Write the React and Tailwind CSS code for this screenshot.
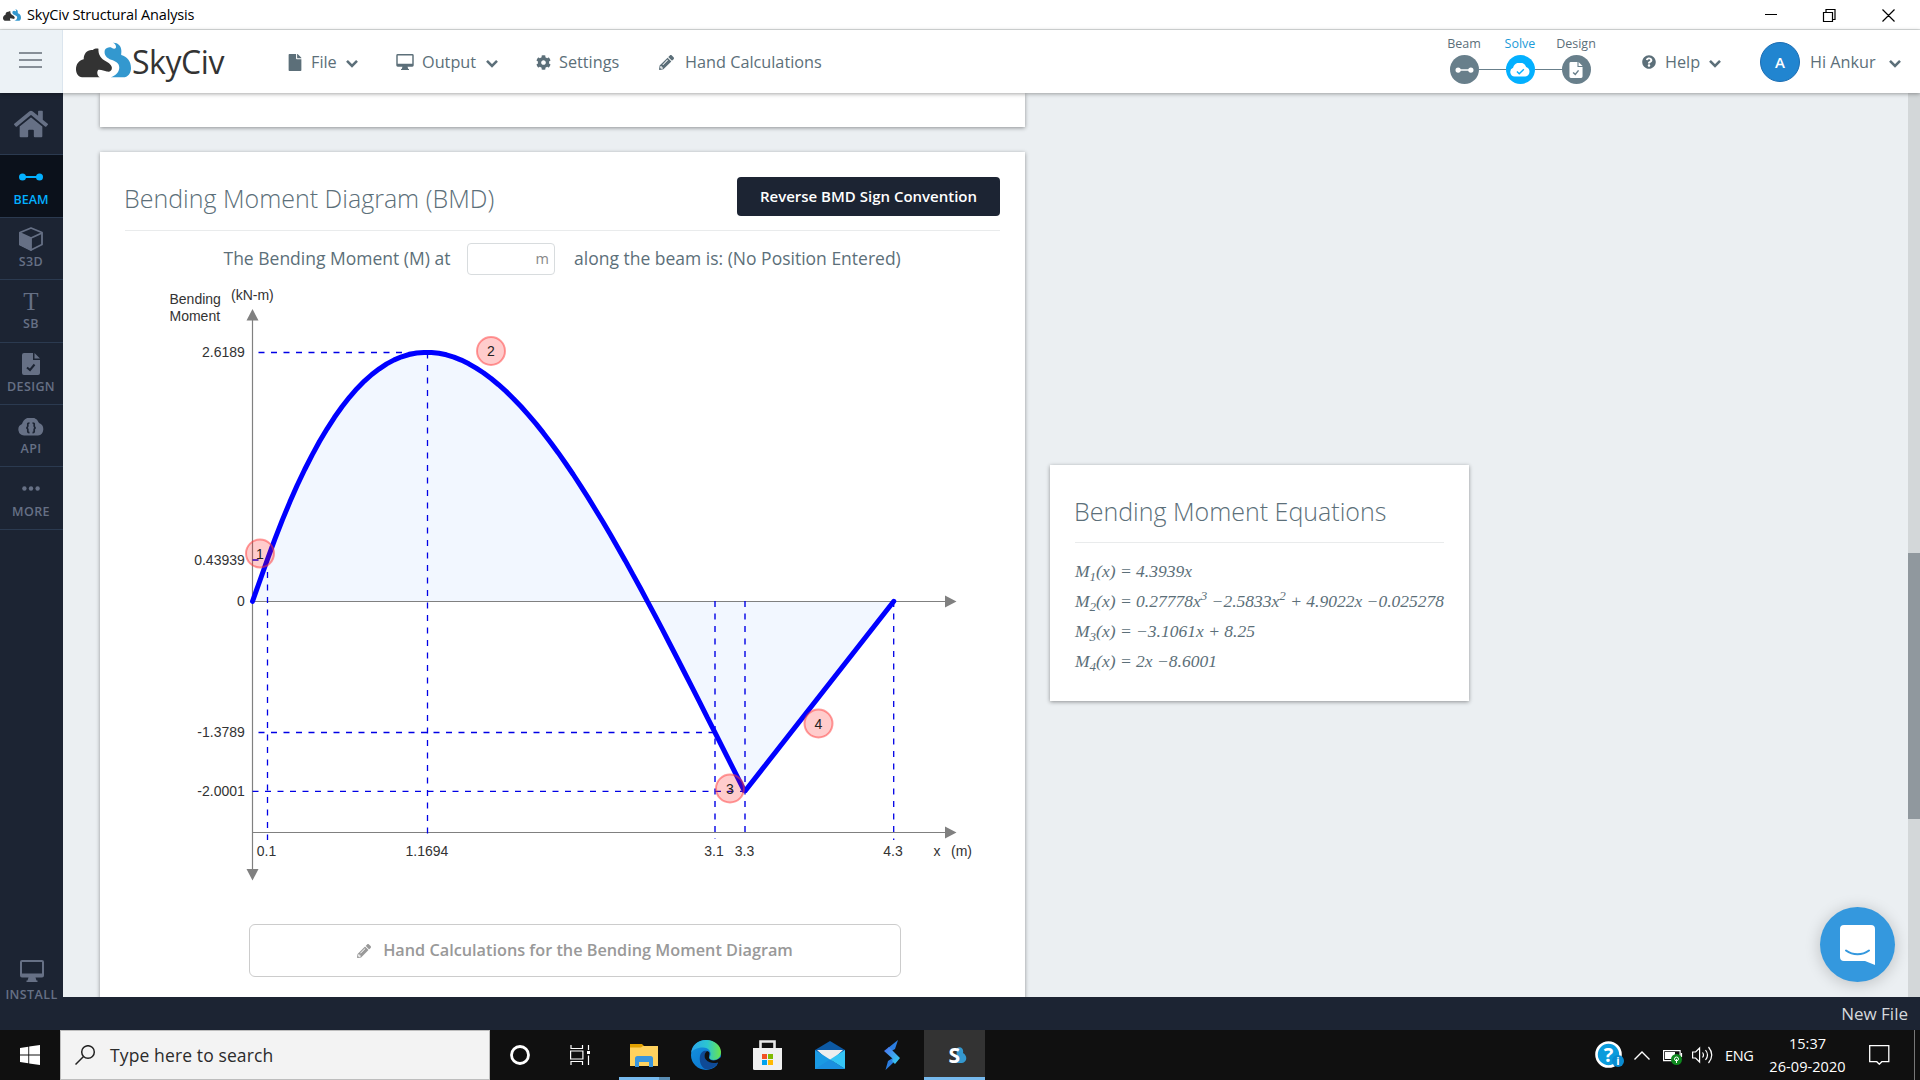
import React from "react";
import { FaHome, FaCog, FaPencilAlt, FaQuestionCircle, FaFile } from "react-icons/fa";

const Chevron = ({ className = "" }) => (
  <svg className={`h-[9px] w-[12px] shrink-0 ${className}`} viewBox="0 0 12 9" fill="none" stroke="currentColor" strokeWidth="2.6">
    <path d="M1 1.8 6 6.8 11 1.8" />
  </svg>
);

const Monitor = ({ className = "" }) => (
  <svg className={`shrink-0 ${className}`} viewBox="0 0 24 22" fill="currentColor">
    <path fillRule="evenodd" d="M2 0h20a2 2 0 0 1 2 2v13.500a2 2 0 0 1-2 2h-6.500l1 3h1v1.500h-11v-1.500h1l1-3h-6.500a2 2 0 0 1-2-2v-13.500a2 2 0 0 1 2-2zM2 2v11.500h20v-11.500z" />
  </svg>
);

const BeamIcon = ({ className = "" }) => (
  <svg className={`shrink-0 ${className}`} viewBox="0 0 24 8" fill="currentColor">
    <circle cx="3.500" cy="4" r="3.500" />
    <circle cx="20.500" cy="4" r="3.500" />
    <path d="M3 3h18v2h-18z" />
  </svg>
);

const DocCheck = ({ className = "", check }) => (
  <svg className={`shrink-0 ${className}`} viewBox="0 0 18 22">
    <path fill="currentColor" d="M2 0h9v7h7v13a2 2 0 0 1-2 2h-14a2 2 0 0 1-2-2v-18a2 2 0 0 1 2-2zM12.500 0 18 5.500h-5.500z" />
    <path className={check} d="M5 14.500 8 17 12.500 11.500" fill="none" strokeWidth="2" />
  </svg>
);

const Cloud = ({ className = "", children }) => (
  <svg className={`shrink-0 ${className}`} viewBox="0 0 26 18">
    <path fill="currentColor" d="M6 17.500a6 6 0 0 1-2-11.500a9 9 0 0 1 17-1a6.500 6.500 0 0 1-1 12.500z" />
    {children}
  </svg>
);

const LogoMark = ({ className = "" }) => (
  <svg className={className} viewBox="0 0 164 107" preserveAspectRatio="none">
    <path
      fill="#3398cf"
      d="M86 24C90 17 100 14 106 17C114 22 121 20 119 12C118 7 115 4 110 2C124 1 135 11 135 24C136 31 134 36 135 39C152 44 164 58 164 77C164 93 155 105 140 105H104C120 99 129 89 129 76C129 63 118 57 105 53C93 49 82 39 86 24z"
    />
    <path
      fill="#333"
      d="M18 105C7 103 0 94 0 81C0 66 9 53 23 51C23 34 34 22 50 24C55 20 61 19 67 20C66 35 72 46 84 54C94 60 105 65 107 76C108 85 101 90 92 88C84 86 76 82 66 83C61 91 64 100 71 105z"
    />
  </svg>
);

function TitleBar() {
  return (
    <div className="flex h-[30px] shrink-0 items-center border-b border-[#dcdfdf] bg-white">
      <LogoMark className="ml-[3px] h-[12px] w-[18px]" />
      <span className="ml-[6px] grow text-[14.500px] tracking-[-0.16px] text-black">SkyCiv Structural Analysis</span>
      <svg className="mr-[25px] h-[14px] w-[130px]" viewBox="0 0 130 14" fill="none" stroke="#000" strokeWidth="1.200">
        <path d="M0 6.500h12M58.500 4.500h9v9h-9zM61 4.500v-3h9v10h-2.500M117.500 1.500l12 12M129.500 1.500l-12 12" />
      </svg>
    </div>
  );
}

const steps = [
  { name: "Beam", icon: <BeamIcon className="h-[6px] w-[19px]" />, tone: "bg-[#687f8b]", text: "text-[#5c6f79]" },
  {
    name: "Solve",
    icon: (
      <Cloud className="h-[14px] w-[20px]">
        <path d="M9 11l3 3l6-6" fill="none" stroke="#03b0ff" strokeWidth="1.800" />
      </Cloud>
    ),
    tone: "bg-[#03b0ff]",
    text: "text-[#1b9bd8]",
  },
  { name: "Design", icon: <DocCheck check="stroke-[#687f8b]" className="h-[16px] w-[14px]" />, tone: "bg-[#687f8b]", text: "text-[#5c6f79]" },
];

function Header() {
  return (
    <header className="relative z-10 flex h-[63px] shrink-0 items-center bg-white text-[16.250px] text-[#5c6f79] shadow-[0_1px_4px_rgba(0,0,0,0.35)]">
      <div className="flex h-full w-[63px] flex-col justify-center gap-[5px] border-r border-[#dbe5ee] bg-[#ecf2f6] pb-1 pl-[19px]">
        <i className="h-[2px] w-[23px] bg-[#878f97]" />
        <i className="h-[2px] w-[23px] bg-[#878f97]" />
        <i className="h-[2px] w-[23px] bg-[#878f97]" />
      </div>
      <div className="flex w-[225px] items-center pl-[13px]">
        <LogoMark className="mb-[4px] h-[36px] w-[55px] shrink-0" />
        <span className="ml-px font-['Open_Sans'] text-[32px] leading-none tracking-[-0.450px] text-[#333]">SkyCiv</span>
      </div>
      <div className="flex w-[108px] items-center pt-px">
        <FaFile className="h-[17px] w-[14px]" />
        <span className="ml-[9px] w-[35px]">File</span>
        <Chevron className="mt-[3px]" />
      </div>
      <div className="flex w-[140px] items-center pt-px">
        <Monitor className="h-[16px] w-[18px]" />
        <span className="ml-[8px] w-[64px]">Output</span>
        <Chevron className="mt-[3px]" />
      </div>
      <div className="flex w-[123px] items-center pt-px">
        <FaCog className="h-[15px] w-[15px]" />
        <span className="ml-[8px]">Settings</span>
      </div>
      <div className="flex grow items-center pt-px">
        <FaPencilAlt className="h-[15px] w-[15px]" />
        <span className="ml-[11px]">Hand Calculations</span>
      </div>
      <div className="mr-[38px] flex pb-[4px]">
        {steps.map((s, i) => (
          <div key={s.name} className="flex w-[56px] flex-col items-center">
            <span className={`text-[12.500px] leading-[18px] ${s.text}`}>{s.name}</span>
            <div className="mt-[2px] flex w-full items-center">
              <i className={`h-px grow ${i ? "bg-[#687f8b]" : ""}`} />
              <b className={`flex h-[29px] w-[29px] items-center justify-center rounded-full text-white ${s.tone}`}>{s.icon}</b>
              <i className={`h-px grow ${i < 2 ? "bg-[#687f8b]" : ""}`} />
            </div>
          </div>
        ))}
      </div>
      <div className="flex w-[118px] items-center pt-px">
        <FaQuestionCircle className="h-[14px] w-[14px]" />
        <span className="ml-[9px] w-[44px]">Help</span>
        <Chevron className="mt-[3px]" />
      </div>
      <div className="flex w-[160px] items-center pt-px">
        <b className="flex h-[40px] w-[40px] items-center justify-center rounded-full border border-[#1b6db3] bg-[#2185d0] text-[15px] font-semibold text-white">A</b>
        <span className="ml-[10px] w-[79px]">Hi Ankur</span>
        <Chevron className="mt-[3px]" />
      </div>
    </header>
  );
}

const nav = [
  { icon: <FaHome className="h-[36px] w-[34px]" /> },
  { label: "BEAM", icon: <BeamIcon className="h-[8px] w-[24px]" />, active: true },
  {
    label: "S3D",
    icon: (
      <svg className="h-[24px] w-[24px]" viewBox="0 0 24 24" fill="none" stroke="currentColor" strokeWidth="1.800" strokeLinejoin="round">
        <path d="M12 1 23 5.500v12L12 23 1 17.500v-12z" />
        <path fill="currentColor" d="M1 6 12 11v12L1 17.500z" />
        <path d="M12 11 23 6" />
      </svg>
    ),
  },
  { label: "SB", icon: <span className="pt-[2px] font-['Liberation_Serif'] text-[25px] font-normal leading-[20px]">T</span> },
  { label: "DESIGN", icon: <DocCheck check="stroke-[#1c2433]" className="h-[22px] w-[18px]" /> },
  {
    label: "API",
    icon: (
      <Cloud className="mt-[2px] h-[18px] w-[26px]">
        <path d="M11.500 5c-2.500 0-1.500 1.500-1.700 3.200q-.2 1.600-1.600 1.600q1.400 0 1.600 1.600c.2 1.700-.8 3.200 1.700 3.200M14.500 5c2.500 0 1.500 1.500 1.700 3.200q.2 1.600 1.600 1.600q-1.400 0-1.600 1.600c-.2 1.700.8 3.200-1.700 3.200" fill="none" stroke="#1c2433" strokeWidth="1.700" />
      </Cloud>
    ),
  },
  {
    label: "MORE",
    icon: (
      <svg className="h-[5px] w-[18px]" viewBox="0 0 18 5" fill="currentColor">
        <circle cx="2.400" cy="2.500" r="2.200" />
        <circle cx="9" cy="2.500" r="2.200" />
        <circle cx="15.600" cy="2.500" r="2.200" />
      </svg>
    ),
  },
];

function Sidebar() {
  return (
    <nav className="flex w-[63px] shrink-0 flex-col bg-[#1c2433] text-[12.500px] font-semibold tracking-[0.4px] text-[#667085]">
      {nav.map((n, i) => (
        <div
          key={i}
          className={`flex h-[62.400px] flex-col items-center justify-center border-b border-[#2b3a50] pr-px ${n.active ? "bg-[#0b111b] tracking-normal text-[#03b0ff]" : ""}`}
        >
          <div className={`flex items-center justify-center ${n.label ? "h-[26px]" : "h-[36px]"}`}>{n.icon}</div>
          {n.label && <span className="mt-px mb-px leading-[17px]">{n.label}</span>}
        </div>
      ))}
      <div className="mt-auto flex flex-col items-center pb-[27px]">
        <Monitor className="h-[22px] w-[24px]" />
        <span className="mt-[4px] leading-[17px]">INSTALL</span>
      </div>
    </nav>
  );
}

const X0 = 252.5;
const Y0 = 601.3;
const px = (x) => X0 + 149.15 * x;
const py = (m) => Y0 - 95.08 * m;
const moment = (x) => 0.27778 * x ** 3 - 2.5833 * x ** 2 + 4.9022 * x - 0.025278;
const curvePoints = [[0, 0], ...Array.from({ length: 61 }, (_, i) => [0.1 + i * 0.05, moment(0.1 + i * 0.05)]), [3.3, -2.0001], [4.3, 0]];
const curve = curvePoints.map(([x, m]) => `${px(x).toFixed(1)},${py(m).toFixed(1)}`).join(" ");

const badges = [
  [260, 553.5, 1],
  [491, 351, 2],
  [730, 788.5, 3],
  [818.5, 723.5, 4],
];
const yLabels = [
  [357, "2.6189"],
  [565, "0.43939"],
  [606, "0"],
  [737, "-1.3789"],
  [796, "-2.0001"],
];
const xLabels = [
  [266.5, "0.1"],
  [427, "1.1694"],
  [714, "3.1"],
  [744.5, "3.3"],
  [893, "4.3"],
  [937, "x"],
  [961.5, "(m)"],
];

function Chart() {
  return (
    <svg className="block h-[610px] w-[925px]" viewBox="100 280 925 610" fontFamily="'Liberation Sans', Arial, sans-serif" fontSize="14" fill="#333">
      <polygon points={curve} fill="#f2f7ff" />
      <path d="M252.500 318V870M252.500 601.500H946M252.500 832.500H946" stroke="#808080" strokeWidth="1.200" fill="none" />
      <path d="M252.500 309l6 11.500h-12zM252.500 880.500l6-11.500h-12zM956.500 601.500l-11.500-6v12zM956.500 832.500l-11.500-6v12z" fill="#808080" />
      <g stroke="#0000e6" strokeWidth="1.300" fill="none">
        <path strokeDasharray="6 6.500" d="M258.500 352.500H427M252.500 560H267M258.500 732.500H715M252.500 791.300H745" />
        <path strokeDasharray="6 6.500" d="M427.500 352.500V834M267.500 572V840M893.700 601V840" />
        <path strokeDasharray="6 6.500" strokeOpacity="0.7" strokeWidth="2" d="M715 601V839M745 601V835" />
      </g>
      <polyline points={curve} fill="none" stroke="#0000ff" strokeWidth="5" strokeLinejoin="bevel" strokeLinecap="round" />
      {badges.map(([x, y, n]) => (
        <g key={n}>
          <circle cx={x} cy={y} r="14" fill="rgba(255,0,0,0.2)" stroke="rgba(255,60,60,0.5)" strokeWidth="2" />
          <text x={x} y={y + 5} textAnchor="middle" fill="#222">{n}</text>
        </g>
      ))}
      {yLabels.map(([y, t]) => (
        <text key={t} x="244.800" y={y} textAnchor="end">{t}</text>
      ))}
      {xLabels.map(([x, t]) => (
        <text key={t} x={x} y="856" textAnchor="middle">{t}</text>
      ))}
      <text x="169.500" y="304">Bending</text>
      <text x="169.500" y="321">Moment</text>
      <text x="231" y="300">(kN-m)</text>
    </svg>
  );
}

const Eq = ({ n, children }) => (
  <p className="h-[30px] whitespace-nowrap leading-[30px]">
    M<span className="relative top-[4px] text-[13px]">{n}</span>(x) = {children}
  </p>
);
const Sup = ({ children }) => <span className="relative -top-[7px] text-[13px]">{children}</span>;

function Content() {
  return (
    <main className="relative flex min-w-0 grow overflow-hidden bg-[#ebeff2] text-[#5c6f79]">
      <div className="ml-[37px] flex w-[925px] shrink-0 flex-col gap-[25px]">
        <section className="h-[34px] shrink-0 bg-white shadow-[0_1px_4px_rgba(0,0,0,0.4)]" />
        <section className="h-[900px] shrink-0 bg-white shadow-[0_1px_4px_rgba(0,0,0,0.4)]">
          <div className="mx-[25px] flex h-[79px] items-start justify-between border-b border-[#e9ebec] pt-[25px]">
            <h2 className="-ml-px pt-[4px] text-[25px] font-light leading-[34px]">Bending Moment Diagram (BMD)</h2>
            <button className="h-[39px] w-[263px] rounded-[4px] bg-[#1c2433] text-[15px] font-semibold text-white">Reverse BMD Sign Convention</button>
          </div>
          <div className="flex h-[49px] items-center pl-[123.500px] pt-[7px] text-[17.500px]">
            <span className="w-[243.500px] whitespace-nowrap pb-[2px]">The Bending Moment (M) at</span>
            <span className="flex h-[32px] w-[88px] items-center justify-end rounded-[4px] border border-[#d8dcde] pb-px pr-[5px] text-[14.500px] text-[#888]">m</span>
            <span className="ml-[19px] whitespace-nowrap pb-[2px]">along the beam is: (No Position Entered)</span>
          </div>
          <Chart />
          <div className="ml-[149px] mt-[34px] flex h-[53px] w-[652px] items-center justify-center gap-[12px] rounded-[6px] border border-[#ccc] text-[16.250px] font-semibold text-[#999]">
            <FaPencilAlt className="h-[14px] w-[14px]" />
            Hand Calculations for the Bending Moment Diagram
          </div>
        </section>
      </div>
      <section className="ml-[25px] mt-[372px] h-[236px] w-[419px] shrink-0 bg-white px-[25px] shadow-[0_1px_4px_rgba(0,0,0,0.4)]">
        <h2 className="-indent-px h-[78px] border-b border-[#e9ebec] pt-[29px] text-[25px] font-light leading-[34px]">Bending Moment Equations</h2>
        <div className="pt-[13px] font-['Liberation_Serif'] text-[17.500px] italic">
          <Eq n="1">4.3939x</Eq>
          <Eq n="2">
            0.27778x<Sup>3</Sup> −2.5833x<Sup>2</Sup> + 4.9022x −0.025278
          </Eq>
          <Eq n="3">−3.1061x + 8.25</Eq>
          <Eq n="4">2x −8.6001</Eq>
        </div>
      </section>
      <div className="ml-auto w-[12px] bg-[#d3d7d9] pt-[460px]">
        <div className="h-[266px] bg-[#90989e]" />
      </div>
      <button className="absolute right-[25px] bottom-[15px] flex h-[75px] w-[75px] items-center justify-center rounded-full bg-[#3498de] shadow-[0_2px_16px_rgba(0,0,0,0.2)]">
        <svg className="mt-px h-[40px] w-[35px]" viewBox="0 0 35 40">
          <path fill="#fff" d="M4 0h27a4 4 0 0 1 4 4v36l-10-4h-21a4 4 0 0 1-4-4v-28a4 4 0 0 1 4-4z" />
          <path d="M6 25.500c7 5 16 5 23 0" fill="none" stroke="#3498de" strokeWidth="2" strokeLinecap="round" />
        </svg>
      </button>
    </main>
  );
}

const apps = [
  {
    id: "cortana",
    cell: "w-[60px]",
    icon: <svg className="h-[22px] w-[22px]" viewBox="0 0 22 22"><circle cx="11" cy="11" r="8.500" fill="none" stroke="#fff" strokeWidth="2.800" /></svg>,
  },
  {
    id: "tasks",
    cell: "w-[60px]",
    icon: (
      <svg className="h-[20px] w-[20px]" viewBox="0 0 20 20" fill="none" stroke="#fff" strokeWidth="1.200">
        <path d="M1 0v3.500h11.500V0M.6 6h12.300v8H.6zM1 20v-3.500h11.500V20M18.500 0v5M18.500 10.500V20" />
        <path fill="#fff" stroke="none" d="M17 6h3v3h-3z" />
      </svg>
    ),
  },
  {
    id: "files",
    cell: "w-[68px]",
    line: "ml-[9px] w-[51px] border-r-[11px] border-[#5a8db3] bg-[#76b9ed]",
    icon: (
      <svg className="h-[24px] w-[28px]" viewBox="0 0 28 24">
        <path fill="#e2a100" d="M0 1h12l2 2v6H0z" />
        <path fill="#ffd25e" d="M0 4.500h11l2-1.500h15v20H0z" />
        <path fill="#3a96dd" d="M7.500 13h13a2.500 2.500 0 0 1 2.500 2.500V24h-4v-5H9v5H5v-8.500A2.500 2.500 0 0 1 7.500 13z" />
      </svg>
    ),
  },
  {
    id: "edge",
    cell: "w-[56px]",
    icon: (
      <svg className="h-[30px] w-[30px]" viewBox="0 0 30 30">
        <defs>
          <linearGradient id="edgeTop"><stop offset="0" stopColor="#2aa5ee" /><stop offset=".55" stopColor="#2cc6cf" /><stop offset="1" stopColor="#6be649" /></linearGradient>
          <linearGradient id="edgeLow" x1="0" x2="1" y1="0" y2="1"><stop offset="0" stopColor="#1494df" /><stop offset="1" stopColor="#0a6cc9" /></linearGradient>
        </defs>
        <circle cx="15" cy="15" r="15" fill="url(#edgeLow)" />
        <path fill="#0f4a96" d="M9 16c1-5 5-6 7-5c-4 3-3 10 3 11c4 1 7 0 9-1c-3 7-10 9-14 8c-4-2-6-8-5-13z" />
        <path fill="#101010" d="M16 11c4 1 2 4 2 6c0 4 7 5 12 0v4c-3 2-8 3-12 1c-5-2-6-8-2-11zM27.500 21.500L30 19v9h-5z" />
        <path fill="url(#edgeTop)" d="M0 13C1 5 7 0 15 0c9 0 15 6 15 12c0 7-6 9-10 7.500c-2-1-2-2-1-3c2-4-1-9-7-9C6 7.500 1 10 0 13z" />
      </svg>
    ),
  },
  {
    id: "store",
    cell: "w-[67px]",
    icon: (
      <svg className="h-[30px] w-[29px]" viewBox="0 0 29 30">
        <path d="M7.500 10V1.500h14V10" fill="none" stroke="#e8e8e8" strokeWidth="2.600" />
        <path fill="#f0f0f0" d="M0 8h29v20.500a1.500 1.500 0 0 1-1.500 1.500h-26A1.500 1.500 0 0 1 0 28.500z" />
        <path fill="#f25022" d="M9 14h5v5H9z" />
        <path fill="#7fba00" d="M15 14h5v5h-5z" />
        <path fill="#00a4ef" d="M9 20h5v5H9z" />
        <path fill="#ffb900" d="M15 20h5v5h-5z" />
      </svg>
    ),
  },
  {
    id: "mail",
    cell: "w-[58px]",
    icon: (
      <svg className="h-[28px] w-[30px]" viewBox="0 0 30 28">
        <path fill="#0c59a4" d="M0 9 15 0l15 9v5H0z" />
        <path fill="#eee" d="M2 9h26L15 21z" />
        <path fill="#1a9ae4" d="M0 9l15 9.500L30 28H0z" />
        <path fill="#35c5f5" d="M30 9v19H30L15 18.500z" />
        <path fill="#1a8fe0" d="M0 28 15 18.500 30 28z" />
      </svg>
    ),
  },
  {
    id: "bolt",
    cell: "w-[65px]",
    icon: (
      <svg className="h-[30px] w-[16px]" viewBox="0 0 16 30">
        <defs><linearGradient id="bolt" y2="1"><stop offset="0" stopColor="#4a6ff0" /><stop offset="1" stopColor="#35d3ee" /></linearGradient></defs>
        <path fill="#2b7de0" d="M14 0 4 8v5l7-4zM1.500 30l8-7.500v-5L4 21z" />
        <path fill="url(#bolt)" d="M0 11l5-4 11 11-5 6-3-3 1-2z" />
      </svg>
    ),
  },
  {
    id: "skyciv",
    cell: "w-[61px] bg-[#333] pl-[7px]",
    line: "w-full bg-[#76b9ed]",
    icon: (
      <span className="relative flex h-[20px] w-[17px] items-center">
        <svg className="absolute inset-0 h-[20px] w-[17px]" viewBox="0 0 17 20"><path fill="#3498cf" d="M7 3c4-2 7 1 6 5c5 3 4 9-1 10H6z" /></svg>
        <b className="relative -ml-px text-[21px] leading-[20px] text-white">S</b>
      </span>
    ),
  },
];

function Taskbar() {
  return (
    <footer className="flex h-[50px] shrink-0 bg-[#101010] text-white">
      <div className="flex w-[60px] items-center justify-center">
        <svg className="h-[20px] w-[20px]" viewBox="0 0 20 20" fill="#fff"><path d="M0 3 8.300 1.800v7.700H0zM9.200 1.600 20 0v9.500H9.200zM0 10.400h8.300v7.800L0 17zM9.200 10.400H20V20L9.200 18.400z" /></svg>
      </div>
      <div className="flex w-[430px] items-center border border-[#bdbdbd] bg-[#f3f3f3] pl-[14px] text-[17.500px] text-[#2b2b2b]">
        <svg className="h-[20px] w-[21px]" viewBox="0 0 21 20" fill="none" stroke="#222" strokeWidth="1.500"><circle cx="13" cy="7" r="6.300" /><path d="M8.500 11.500.5 19.500" /></svg>
        <span className="ml-[14px] tracking-[0.120px]">Type here to search</span>
      </div>
      <div className="flex">
        {apps.map((a) => (
          <div key={a.id} className={`relative flex items-center justify-center ${a.cell}`}>
            {a.icon}
            {a.line && <i className={`absolute bottom-0 left-0 h-[3px] ${a.line}`} />}
          </div>
        ))}
      </div>
      <div className="ml-auto flex items-center">
        <svg className="h-[28px] w-[29px] overflow-visible" viewBox="0 0 29 28">
          <circle cx="13.500" cy="13.500" r="12" fill="#0a9bdc" stroke="#fff" strokeWidth="2.600" />
          <text x="13.500" y="20.500" textAnchor="middle" fontFamily="Open Sans" fontWeight="700" fontSize="20" fill="#fff">?</text>
          <circle cx="23" cy="20" r="6" fill="#0a8bd0" />
          <text x="23" y="24" textAnchor="middle" fontFamily="Open Sans" fontWeight="700" fontSize="11" fill="#fff">i</text>
        </svg>
        <svg className="ml-[10px] h-[9px] w-[16px]" viewBox="0 0 16 9" fill="none" stroke="#fff" strokeWidth="1.400"><path d="M.5 8.500 8 1l7.500 7.500" /></svg>
        <svg className="ml-[13px] mt-[3px] h-[16px] w-[20px]" viewBox="0 0 20 16">
          <path d="M.6 1.600h16.500v10H.6zM18.500 4v4" fill="none" stroke="#fff" strokeWidth="1.200" />
          <path fill="#fff" d="M2 3h10v7H2z" />
          <circle cx="13.500" cy="10.500" r="5.500" fill="#0f8a1f" />
          <path d="M13.500 14v-4M11.500 10a2 2 0 1 1 4 0q0 1.500-2 2q-2-.5-2-2z" fill="none" stroke="#fff" />
        </svg>
        <svg className="ml-[9px] h-[18px] w-[21px]" viewBox="0 0 21 18" fill="none" stroke="#fff" strokeWidth="1.200"><path d="M.6 6v6h3l4 4V2L3.600 6zM10.500 6.500q2 2.500 0 5M13.500 4q4 5 0 10M16.500 1q6.500 8 0 16" /></svg>
        <span className="ml-[12px] w-[29px] pt-px text-[14.500px] tracking-[-0.3px]">ENG</span>
        <div className="ml-[10px] w-[87px] text-center text-[14.500px] leading-[23px] tracking-[0px]">
          <div>15:37</div>
          <div className="tracking-[0.070px]">26-09-2020</div>
        </div>
        <svg className="ml-[18px] h-[20px] w-[21px]" viewBox="0 0 21 20" fill="none" stroke="#fff" strokeWidth="1.300"><path d="M.7.7h19.100v16h-7l-2.500 2.500-2.500-2.500H.7z" /></svg>
        <i className="ml-[24px] mr-[5px] h-[50px] w-px bg-[#777]" />
      </div>
    </footer>
  );
}

export default function App() {
  return (
    <div className="flex h-[1080px] w-[1920px] flex-col overflow-hidden bg-white font-['Open_Sans',sans-serif]">
      <TitleBar />
      <Header />
      <div className="flex min-h-0 grow bg-[#1c2433]">
        <Sidebar />
        <div className="flex min-w-0 grow flex-col">
          <Content />
          <div className="flex h-[33px] shrink-0 items-center justify-end pr-[12px] pt-px text-[17px] text-[#d5d8dc]">New File</div>
        </div>
      </div>
      <Taskbar />
    </div>
  );
}
